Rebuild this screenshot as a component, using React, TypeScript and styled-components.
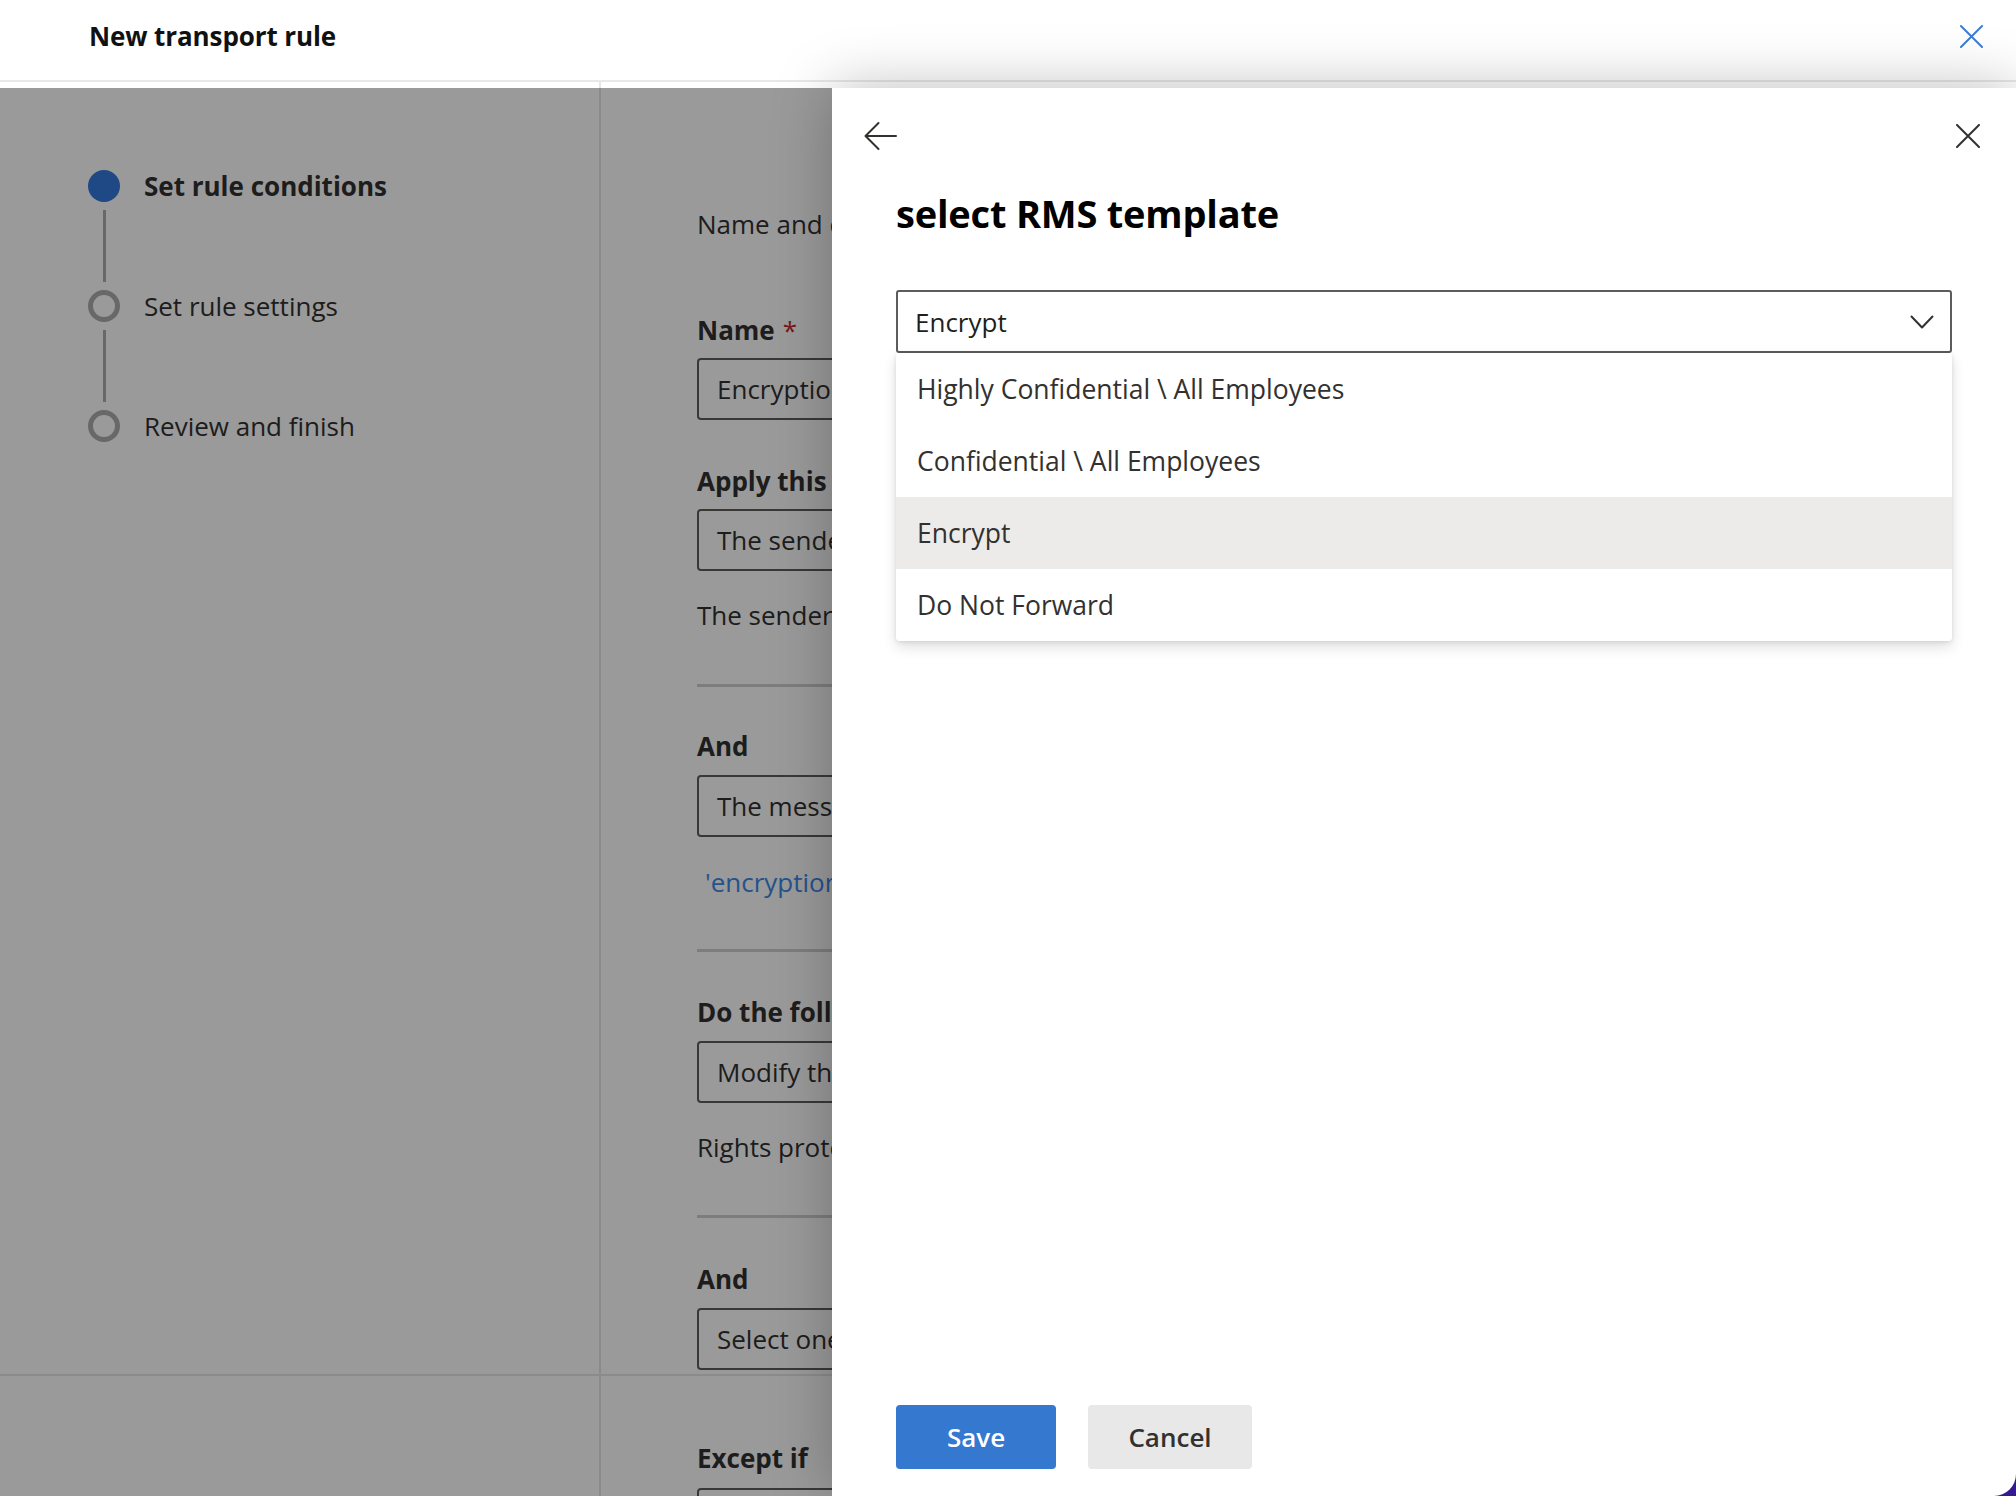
import React from "react";
import styled, { createGlobalStyle } from "styled-components";

const GlobalStyle = createGlobalStyle`
  html, body { margin: 0; padding: 0; height: 100%; overflow: hidden; background: #fff; }
  body { font-family: "Open Sans", "Noto Sans", "DejaVu Sans", sans-serif; color: #323130; }
  #root { height: 100%; }
  *, *::before, *::after { box-sizing: border-box; }
`;

const Page = styled.div`
  position: relative;
  width: 100%;
  height: 100vh;
  overflow: hidden;
  display: flex;
  flex-direction: column;
  background: #fff;
`;

const Header = styled.header`
  flex: none;
  height: 82px;
  border-bottom: 2px solid #e8e8e8;
  display: flex;
  align-items: center;
  justify-content: space-between;
  padding: 0 33px 8px 89px;
  background: #fff;
`;

const HeaderTitle = styled.h1`
  margin: 0;
  font-size: 26px;
  font-weight: 700;
  color: #111;
  letter-spacing: -0.1px;
`;

const IconButton = styled.button<{ $size: number }>`
  border: 0;
  background: transparent;
  padding: 0;
  width: ${(p) => p.$size}px;
  height: ${(p) => p.$size}px;
  display: flex;
  align-items: center;
  justify-content: center;
  cursor: pointer;
`;

const Body = styled.div`
  flex: 1;
  display: grid;
  grid-template-columns: 599px 2px 1fr;
  grid-template-rows: 1292px 2px 1fr;
  min-height: 0;
`;

const Nav = styled.nav`
  grid-column: 1;
  grid-row: 1;
  padding: 88px 0 0 88px;
  display: flex;
  flex-direction: column;
`;

const VRule = styled.div`
  grid-column: 2;
  grid-row: 1 / 4;
  background: #e6e6e6;
`;

const HRule = styled.div`
  grid-column: 1 / 4;
  grid-row: 2;
  background: #e6e6e6;
`;

const Step = styled.div`
  display: flex;
  align-items: center;
  gap: 24px;
  height: 32px;
`;

const StepDot = styled.span<{ $active?: boolean }>`
  flex: none;
  width: 32px;
  height: 32px;
  border-radius: 50%;
  background: ${(p) => (p.$active ? "#3379dc" : "transparent")};
  border: ${(p) => (p.$active ? "none" : "5px solid #acacac")};
`;

const StepLabel = styled.span<{ $active?: boolean }>`
  font-size: 26px;
  font-weight: ${(p) => (p.$active ? 700 : 400)};
  color: #323130;
  white-space: nowrap;
`;

const StepConnector = styled.div`
  width: 3px;
  height: 72px;
  margin: 8px 0 8px 14.5px;
  background: #acacac;
`;

const Content = styled.div<{ $top: number; $row: number }>`
  grid-column: 3;
  grid-row: ${(p) => p.$row};
  width: 231px;
  padding: ${(p) => p.$top}px 0 0 96px;
  display: flex;
  flex-direction: column;
  overflow: hidden;
  white-space: nowrap;
`;

const BodyText = styled.div<{ $mt: number }>`
  margin-top: ${(p) => p.$mt}px;
  font-size: 26px;
  line-height: 36px;
  color: #323130;
`;

const LinkText = styled(BodyText)`
  color: #3c8ae8;
  padding-left: 8px;
`;

const FieldLabel = styled.div<{ $mt: number }>`
  margin-top: ${(p) => p.$mt}px;
  font-size: 26px;
  line-height: 36px;
  font-weight: 700;
  color: #323130;
`;

const Required = styled.span`
  color: #c4262e;
  margin-left: 8px;
  font-weight: 400;
`;

const TextBox = styled.div<{ $mt?: number }>`
  margin-top: ${(p) => p.$mt ?? 10}px;
  width: 900px;
  height: 62px;
  flex: none;
  border: 2px solid #605e5c;
  border-radius: 4px;
  padding-left: 18px;
  display: flex;
  align-items: center;
  font-size: 26px;
  color: #323130;
`;

const Divider = styled.div<{ $mt: number }>`
  margin-top: ${(p) => p.$mt}px;
  width: 900px;
  height: 3px;
  flex: none;
  background: #d0d0d0;
`;

const Overlay = styled.div`
  position: absolute;
  top: 88px;
  left: 0;
  right: 0;
  bottom: 0;
  background: rgba(0, 0, 0, 0.396);
`;

const CornerTint = styled.div`
  position: absolute;
  right: 0;
  bottom: 0;
  width: 24px;
  height: 24px;
  background: #3a1c9c;
`;

const Panel = styled.aside`
  position: absolute;
  top: 88px;
  left: 832px;
  right: 0;
  bottom: 0;
  background: #fff;
  box-shadow: 0 0 60px rgba(0, 0, 0, 0.26);
  border-bottom-right-radius: 22px;
  display: flex;
  flex-direction: column;
  padding: 0 64px 27px 64px;
`;

const PanelTop = styled.div`
  height: 96px;
  margin: 0 -34px 0 -34px;
  display: flex;
  align-items: center;
  justify-content: space-between;
`;

const PanelTitle = styled.h2`
  margin: 5px 0 0;
  font-size: 38px;
  line-height: 48px;
  font-weight: 700;
  color: #000;
  letter-spacing: -0.2px;
`;

const DropdownWrap = styled.div`
  position: relative;
  margin-top: 53px;
`;

const DropdownField = styled.div`
  height: 63px;
  border: 2px solid #5c5c5c;
  border-radius: 3px;
  display: flex;
  align-items: center;
  justify-content: space-between;
  padding: 0 16px 0 17px;
  font-size: 26px;
  color: #201f1e;
`;

const Listbox = styled.ul`
  position: absolute;
  top: 100%;
  left: 0;
  right: 0;
  margin: 0;
  padding: 0;
  list-style: none;
  background: #fff;
  border-radius: 0 0 4px 4px;
  box-shadow: 0 6px 14px rgba(0, 0, 0, 0.13), 0 1px 4px rgba(0, 0, 0, 0.1);
  overflow: hidden;
`;

const Option = styled.li<{ $selected?: boolean }>`
  height: 72px;
  display: flex;
  align-items: center;
  padding-left: 21px;
  font-size: 26.5px;
  color: #323130;
  background: ${(p) => (p.$selected ? "#edebe9" : "#fff")};
`;

const Footer = styled.div`
  margin-top: auto;
  display: flex;
  gap: 32px;
`;

const Button = styled.button<{ $primary?: boolean }>`
  height: 64px;
  width: ${(p) => (p.$primary ? 160 : 164)}px;
  border: 0;
  border-radius: 4px;
  font-family: inherit;
  font-size: 26px;
  font-weight: 600;
  background: ${(p) => (p.$primary ? "#3578d0" : "#e8e8e8")};
  color: ${(p) => (p.$primary ? "#fff" : "#323130")};
  cursor: pointer;
`;

const CloseIcon = ({ color, size }: { color: string; size: number }) => (
  <svg width={size} height={size} viewBox="0 0 24 24" fill="none">
    <path d="M1 1 L23 23 M23 1 L1 23" stroke={color} strokeWidth="2" strokeLinecap="round" />
  </svg>
);

const BackIcon = () => (
  <svg width="34" height="30" viewBox="0 0 34 30" fill="none">
    <path d="M33 15 H2.5 M15.5 2 L2.5 15 L15.5 28" stroke="#323130" strokeWidth="2" strokeLinecap="round" strokeLinejoin="round" />
  </svg>
);

const ChevronDown = () => (
  <svg width="24" height="14" viewBox="0 0 24 14" fill="none">
    <path d="M1.5 1.5 L12 12.5 L22.5 1.5" stroke="#323130" strokeWidth="2" strokeLinecap="round" strokeLinejoin="round" />
  </svg>
);

const steps = [
  { label: "Set rule conditions", active: true },
  { label: "Set rule settings", active: false },
  { label: "Review and finish", active: false },
];

const options = [
  "Highly Confidential \\ All Employees",
  "Confidential \\ All Employees",
  "Encrypt",
  "Do Not Forward",
];

export default function App() {
  return (
    <>
      <GlobalStyle />
      <Page>
        <Header>
          <HeaderTitle>New transport rule</HeaderTitle>
          <IconButton $size={24} aria-label="Close">
            <CloseIcon color="#3b7bd6" size={23} />
          </IconButton>
        </Header>
        <Body>
          <Nav>
            {steps.map((s, i) => (
              <React.Fragment key={s.label}>
                {i > 0 && <StepConnector />}
                <Step>
                  <StepDot $active={s.active} />
                  <StepLabel $active={s.active}>{s.label}</StepLabel>
                </Step>
              </React.Fragment>
            ))}
          </Nav>
          <VRule />
          <Content $top={124} $row={1}>
            <BodyText $mt={0}>Name and conditions</BodyText>
            <FieldLabel $mt={70}>
              Name<Required>*</Required>
            </FieldLabel>
            <TextBox>Encryption rule</TextBox>
            <FieldLabel $mt={43}>Apply this rule if</FieldLabel>
            <TextBox>The sender</TextBox>
            <BodyText $mt={26}>The sender is located</BodyText>
            <Divider $mt={51} />
            <FieldLabel $mt={41}>And</FieldLabel>
            <TextBox $mt={11}>The message properties</TextBox>
            <LinkText $mt={27}>'encryption'</LinkText>
            <Divider $mt={49} />
            <FieldLabel $mt={42}>Do the following</FieldLabel>
            <TextBox $mt={11}>Modify the message security</TextBox>
            <BodyText $mt={26}>Rights protect message</BodyText>
            <Divider $mt={50} />
            <FieldLabel $mt={43}>And</FieldLabel>
            <TextBox $mt={11}>Select one</TextBox>
          </Content>
          <HRule />
          <Content $top={64} $row={3}>
            <FieldLabel $mt={0}>Except if</FieldLabel>
            <TextBox $mt={12}>Select one</TextBox>
          </Content>
        </Body>
        <Overlay />
        <CornerTint />
        <Panel>
          <PanelTop>
            <IconButton $size={36} aria-label="Back">
              <BackIcon />
            </IconButton>
            <IconButton $size={36} aria-label="Close panel">
              <CloseIcon color="#323130" size={24} />
            </IconButton>
          </PanelTop>
          <PanelTitle>select RMS template</PanelTitle>
          <DropdownWrap>
            <DropdownField>
              <span>Encrypt</span>
              <ChevronDown />
            </DropdownField>
            <Listbox role="listbox">
              {options.map((o) => (
                <Option key={o} $selected={o === "Encrypt"}>
                  {o}
                </Option>
              ))}
            </Listbox>
          </DropdownWrap>
          <Footer>
            <Button $primary>Save</Button>
            <Button>Cancel</Button>
          </Footer>
        </Panel>
      </Page>
    </>
  );
}
